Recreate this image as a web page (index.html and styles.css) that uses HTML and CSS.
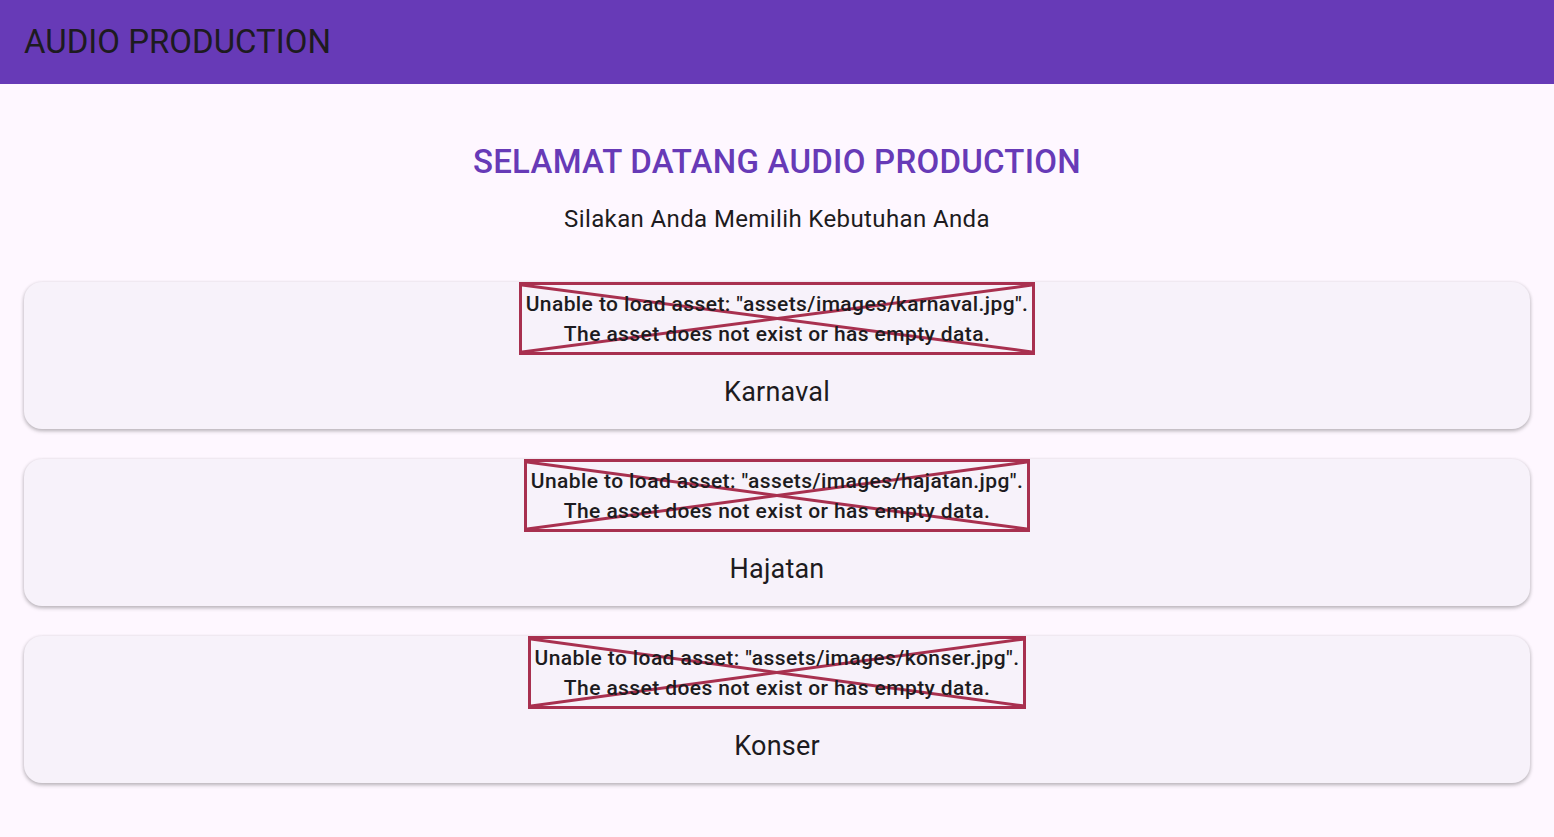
FILE: index.html
```html
<!DOCTYPE html>
<html>
<head>
<meta charset="utf-8">
<link rel="stylesheet" href="styles.css">
</head>
<body>
<header class="appbar"><span class="appbar-title">AUDIO PRODUCTION</span></header>
<main class="content">
  <h1 class="heading">SELAMAT DATANG AUDIO PRODUCTION</h1>
  <p class="subtitle">Silakan Anda Memilih Kebutuhan Anda</p>
  <div class="cards">
    <div class="card">
      <div class="error-box">
        <svg class="cross" viewBox="0 0 100 100" preserveAspectRatio="none"><line x1="0" y1="0" x2="100" y2="100" vector-effect="non-scaling-stroke"/><line x1="100" y1="0" x2="0" y2="100" vector-effect="non-scaling-stroke"/></svg>
        <div class="error-text">Unable to load asset: "assets/images/karnaval.jpg".<br>The asset does not exist or has empty data.</div>
      </div>
      <div class="card-label">Karnaval</div>
    </div>
    <div class="card">
      <div class="error-box">
        <svg class="cross" viewBox="0 0 100 100" preserveAspectRatio="none"><line x1="0" y1="0" x2="100" y2="100" vector-effect="non-scaling-stroke"/><line x1="100" y1="0" x2="0" y2="100" vector-effect="non-scaling-stroke"/></svg>
        <div class="error-text">Unable to load asset: "assets/images/hajatan.jpg".<br>The asset does not exist or has empty data.</div>
      </div>
      <div class="card-label">Hajatan</div>
    </div>
    <div class="card">
      <div class="error-box">
        <svg class="cross" viewBox="0 0 100 100" preserveAspectRatio="none"><line x1="0" y1="0" x2="100" y2="100" vector-effect="non-scaling-stroke"/><line x1="100" y1="0" x2="0" y2="100" vector-effect="non-scaling-stroke"/></svg>
        <div class="error-text">Unable to load asset: "assets/images/konser.jpg".<br>The asset does not exist or has empty data.</div>
      </div>
      <div class="card-label">Konser</div>
    </div>
  </div>
</main>
</body>
</html>
```
FILE: styles.css
```css
html, body {
  margin: 0;
  padding: 0;
}
body {
  background: #FEF7FF;
  font-family: Roboto, "Liberation Sans", sans-serif;
  color: #1D1B20;
}
.appbar {
  height: 84px;
  background: #673AB7;
  display: flex;
  align-items: center;
  padding: 0 24px 2px;
  box-sizing: border-box;
}
.appbar-title {
  font-size: 33px;
  font-weight: 400;
  color: #1D1B20;
  line-height: 1;
}
.content {
  padding: 58px 24px 24px;
  display: flex;
  flex-direction: column;
  align-items: center;
}
.heading {
  margin: 0;
  font-size: 33px;
  font-weight: 500;
  letter-spacing: 0.25px;
  color: #673AB7;
  line-height: 39px;
  text-align: center;
}
.subtitle {
  margin: 24px 0 0;
  font-size: 24px;
  line-height: 28px;
  letter-spacing: 0.38px;
  text-align: center;
}
.cards {
  margin-top: 49px;
  width: 100%;
  display: flex;
  flex-direction: column;
  gap: 30px;
}
.card {
  height: 147px;
  box-sizing: border-box;
  background: #F7F2FA;
  border-radius: 18px;
  box-shadow: 0 2px 4px rgba(0,0,0,0.22), 0 1px 3px 1px rgba(0,0,0,0.08);
  display: flex;
  flex-direction: column;
  align-items: center;
}
.error-box {
  position: relative;
  height: 73px;
  box-sizing: border-box;
  border: 3px solid #A8304F;
  padding: 3px 4px;
  display: flex;
  align-items: center;
}
.cross {
  position: absolute;
  inset: 0;
  width: 100%;
  height: 100%;
}
.cross line {
  stroke: #A8304F;
  stroke-width: 3px;
}
.error-text {
  position: relative;
  font-size: 21px;
  font-weight: 500;
  letter-spacing: 0.4px;
  line-height: 30px;
  text-align: center;
  color: #1D1B20;
  white-space: nowrap;
}
.card-label {
  margin-top: 21px;
  font-size: 27px;
  line-height: 32px;
  letter-spacing: 0.2px;
}
```
